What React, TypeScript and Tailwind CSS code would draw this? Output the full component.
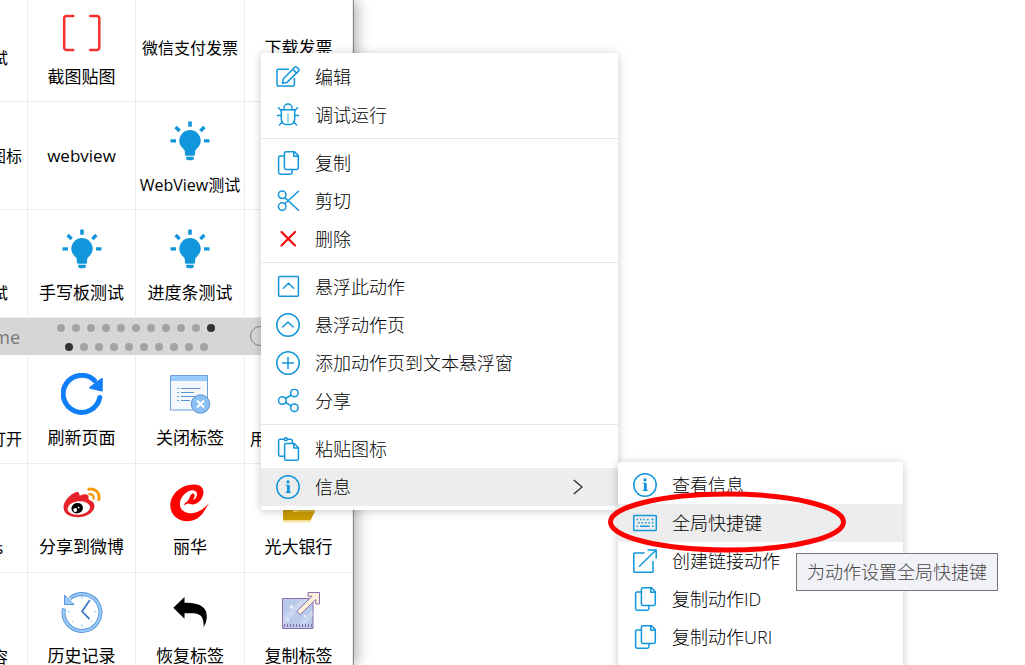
import { useState, type ReactNode } from 'react';

interface ActionCell {
  label: string;
  icon?: ReactNode;
  small?: boolean;
}

interface MenuEntry {
  label: string;
  icon: ReactNode;
  hasSubmenu?: boolean;
}

/* ---------- action icons ---------- */

function BracketIcon() {
  return (
    <svg viewBox="0 0 40 40" className="size-10" fill="none" stroke="#f5302e" strokeWidth="2.5" strokeLinecap="round">
      <path d="M11.200 3H4.500a2.300 2.300 0 0 0-2.300 2.300v29.400A2.300 2.300 0 0 0 4.500 37h6.700" />
      <path d="M28.300 3h6.700a2.300 2.300 0 0 1 2.300 2.300v29.400a2.300 2.300 0 0 1-2.300 2.300h-6.700" />
    </svg>
  );
}

function BulbIcon() {
  return (
    <svg viewBox="0 0 40 40" className="size-10" fill="#1296db">
      <path d="M20 9.100a10.700 10.700 0 0 1 10.700 10.700c0 4.300-2.600 6.600-4.600 8.600-.9.900-1 2-1 3.200v1.600a1.500 1.500 0 0 1-1.500 1.500h-7.200a1.500 1.500 0 0 1-1.500-1.500v-1.600c0-1.200-.1-2.300-1-3.200-2-2-4.600-4.300-4.600-8.600A10.700 10.700 0 0 1 20 9.100z" />
      <path d="M16.200 35.800h7.600v1.500a2 2 0 0 1-2 2h-3.600a2 2 0 0 1-2-2z" />
      <path d="M18.200.6h3.600v5.200h-3.600zM.5 18.200h5.500v3.400H.5zM34 18.200h5.500v3.400H34z" />
      <path d="M6.800 4.800l4 4-2.400 2.400-4-4zM33.200 4.800l-4 4 2.400 2.400 4-4z" />
    </svg>
  );
}

function RefreshIcon() {
  return (
    <svg viewBox="0 0 42 42" className="size-[42px]" fill="none">
      <path d="M38.800 24.500A18.500 18.500 0 1 1 33.500 7.500" stroke="#0f7ef7" strokeWidth="5" strokeLinecap="round" />
      <path d="M40.200 5.200a1 1 0 0 1 1.600.8v11.500a1 1 0 0 1-1.200 1l-11.600-2.700a1 1 0 0 1-.5-1.700z" fill="#0f7ef7" />
    </svg>
  );
}

function CloseTabIcon() {
  return (
    <svg viewBox="0 0 42 42" className="size-[42px]" fill="none">
      <path d="M1.500 2.500h37v34.500h-37z" fill="#f4f8fd" stroke="#6ba0da" />
      <path d="M2 3h36v5H2z" fill="#98ccfd" />
      <path d="M8 15.500h2M8 19.500h2M8 23.500h2M8 27.500h2" stroke="#6ba0da" />
      <path d="M12 15.500h19.500M12 19.500h13M12 23.500h15M12 27.500h9" stroke="#5b94d3" />
      <circle cx="31.500" cy="31" r="9.200" fill="#8cc0f5" stroke="#5b94d3" />
      <path d="M28 27.500l7 7M35 27.500l-7 7" stroke="#fff" strokeWidth="2" />
    </svg>
  );
}

function WeiboIcon() {
  return (
    <svg viewBox="0 0 40 40" className="size-10" fill="none">
      <path
        d="M1.500 24c0-5 5-11 10.500-14 3-1.600 5.500-1.200 5.300 1.200-.1 1 .3 1.600 1.500 1.100 3-1.400 7.200-1.400 7.700 1.200.3 1.500-.6 2.700 1 3.400 2.800 1 5 2.800 5 6 0 6-7.500 11.300-16.500 11.300S1.500 30.500 1.500 24z"
        fill="#e6232a"
      />
      <ellipse cx="16.800" cy="25" rx="11.200" ry="6.700" fill="#fff" transform="rotate(-6 16.800 25)" />
      <ellipse cx="15.200" cy="25.200" rx="5.800" ry="5.200" fill="#000" transform="rotate(-20 15.200 25.200)" />
      <circle cx="13.200" cy="27" r="1.900" fill="#fff" />
      <circle cx="16.600" cy="24.600" r="0.900" fill="#fff" />
      <path d="M26.800 6.200C33 5 38.300 9.500 36.800 16.500" stroke="#f59a11" strokeWidth="3" strokeLinecap="round" />
      <path d="M27.500 11.300c2.800-.4 4.600 1.500 4 4.200" stroke="#f59a11" strokeWidth="2.400" strokeLinecap="round" />
    </svg>
  );
}

function LihuaIcon() {
  return (
    <svg viewBox="0 0 40 40" className="size-10" fill="#fe0000">
      <path d="M14 21.800c.2-1.700 2.600-2.500 4-4.300 1.700-2.300 2-5.600 3.700-6.600 1.800-.9 3.300.3 2.900 2.300-.3 1.600-1.100 2.600-1.300 3.900 2.700-1.300 4-4.500 3.600-6.800C26.400 7.500 22 6.300 18 8.500c-5.500 3.200-8.800 8.800-8 14 .9 5.500 6.500 8.600 13.500 7.500C31 28.800 34.500 24 39.700 20c-2.500 2.500-3.700 5.500-6 9-3.700 5.500-9.500 9.300-16.500 9.200C7.500 38 .3 31.500.3 22.500.3 12 10 1.800 24.500 1.600c5.500-.1 9.500 3.400 8.900 8.800-.6 5.600-5.500 11-11.200 11-1.600 0-2.500-1-4-.8-1.500.1-2.700 1.700-4.200 1.200z" />
    </svg>
  );
}

function EverbrightIcon() {
  return (
    <svg viewBox="0 0 40 40" className="size-10">
      <path d="M4 2h10v27H4z" fill="#c89600" />
      <path d="M14 2h4v27h-4z" fill="#f6d25a" />
      <path d="M18 16h18v13l-4 3H18z" fill="#d8b23a" />
      <path d="M4 29h31.500l-4 8.500H4z" fill="#cb9b05" />
      <path d="M4 37.500h28v2H4z" fill="#f6e7a8" />
    </svg>
  );
}

function HistoryIcon() {
  return (
    <svg viewBox="0 0 42 42" className="size-[42px]" fill="none">
      <path d="M3 17.500A18.400 18.400 0 1 0 9 7.500" stroke="#5a93d2" strokeWidth="4" />
      <path d="M3 17.500A18.400 18.400 0 1 0 9 7.500" stroke="#98ccfd" strokeWidth="2.200" />
      <path d="M3.500 4v9.500H13z" fill="#98ccfd" stroke="#5a93d2" strokeLinejoin="round" />
      <path d="M28.500 9.500L21 20.500l7 7" stroke="#3f7fc4" strokeWidth="1.800" strokeLinecap="round" />
      <path d="M21 5.500v2M21 33.500v2M6.500 20.500h2M33.500 20.500h2M11 30.500h1M30 30.500h1" stroke="#98ccfd" strokeWidth="1.500" />
    </svg>
  );
}

function UndoIcon() {
  return (
    <svg viewBox="0 0 40 40" className="size-10" fill="#000">
      <path d="M3.300 15.800L14.500 5v5.700c9 0 17.500 1.300 20.800 7.300 2.700 5.500 1.500 12-1.600 17 .2-8.500-2-13.200-9.700-13.700-3.300-.2-6.300 0-9.500 0v5.500z" />
    </svg>
  );
}

function CopyTabIcon() {
  return (
    <svg viewBox="0 0 42 42" className="size-[42px]" fill="none">
      <path d="M4.500 7.500h30.500v30h-30.500z" fill="#b9cbea" stroke="#8e6cab" />
      <path d="M5 27L24 8h7L5 34zM20 34L34.500 19v6L25 34z" fill="#cbd7f1" />
      <path d="M6 34.500h29" stroke="#7d5b9d" strokeWidth="2.500" strokeDasharray="1 2" />
      <path d="M13.500 14v4M11.500 16h4M27 24v2M26 25h2M10 28v2M9 29h2" stroke="#fff" />
      <path d="M19 20.200L34 5.200h-4V1.500h11.500V13h-3.700V8.500L22 23.800z" fill="#fdf1dc" stroke="#8e6cab" strokeLinejoin="round" />
    </svg>
  );
}

/* ---------- menu icons ---------- */

function MenuIcon({ children }: { children: ReactNode }) {
  return (
    <svg
      viewBox="0 0 24 24"
      className="size-6 shrink-0"
      fill="none"
      stroke="#1296db"
      strokeWidth="1.5"
      strokeLinecap="round"
      strokeLinejoin="round"
    >
      {children}
    </svg>
  );
}

const editIcon = (
  <MenuIcon>
    <path d="M12.500 4.200H2.200A1.200 1.200 0 0 0 1 5.400v14.400A1.200 1.200 0 0 0 2.200 21h15a1.200 1.200 0 0 0 1.200-1.200V13.500" />
    <path d="M6.500 18.300l.9-4.500L18.700 2.300a1.500 1.500 0 0 1 2.100 0l1.700 1.700a1.500 1.500 0 0 1 0 2.100L11 17.400zM16.800 4.300l3.800 3.800" />
  </MenuIcon>
);

const bugIcon = (
  <MenuIcon>
    <path d="M5.300 6.800h13.400v9.700a5 5 0 0 1-5 5h-3.400a5 5 0 0 1-5-5z" />
    <path d="M8 6.800V5a4 4 0 0 1 8 0v1.800M1.500 12.500h3.800M18.700 12.500h3.800M5.300 7.800L2.500 4.800M18.700 7.800l2.800-3M6.500 19l-3.200 3M17.500 19l3.200 3" />
    <path d="M12 11V19.500" strokeWidth="0.800" />
  </MenuIcon>
);

const copyIcon = (
  <MenuIcon>
    <path d="M10 .8h8.500l3.800 3.800v12.200a1.600 1.600 0 0 1-1.600 1.600H10a1.600 1.600 0 0 1-1.600-1.600V2.400A1.600 1.600 0 0 1 10 .8zM17.800 1v4.300h4.300" />
    <path d="M8.400 5H4.200a1.600 1.600 0 0 0-1.600 1.600v15A1.600 1.600 0 0 0 4.200 23.200h10.200a1.600 1.600 0 0 0 1.600-1.600v-3" />
  </MenuIcon>
);

const cutIcon = (
  <MenuIcon>
    <circle cx="6.200" cy="5.700" r="3.800" />
    <circle cx="6.200" cy="17.600" r="3.800" />
    <path d="M8.800 8.500L22.500 21.300M8.800 14.800L22.500 2.200" />
  </MenuIcon>
);

const deleteIcon = (
  <MenuIcon>
    <path d="M5.500 5l13.500 13.500M19 5L5.500 18.500" stroke="#f20d0d" strokeWidth="2.200" />
  </MenuIcon>
);

const floatActionIcon = (
  <MenuIcon>
    <rect x="2.600" y="1.600" width="19.800" height="19.600" rx="1" />
    <path d="M7.300 13.300l5.200-5 5.200 5" />
  </MenuIcon>
);

const floatPageIcon = (
  <MenuIcon>
    <circle cx="12" cy="12" r="11.200" />
    <path d="M6.800 14l5.200-5 5.200 5" />
  </MenuIcon>
);

const addIcon = (
  <MenuIcon>
    <circle cx="12" cy="12" r="11.200" />
    <path d="M12 6.500v11M6.500 12h11" />
  </MenuIcon>
);

const shareIcon = (
  <MenuIcon>
    <circle cx="6.300" cy="11.500" r="3.800" />
    <circle cx="18.400" cy="4" r="3.800" />
    <circle cx="18.400" cy="18.800" r="3.800" />
    <path d="M9.600 9.500l5.600-3.500M9.600 13.500l5.600 3.400" />
  </MenuIcon>
);

const pasteIcon = (
  <MenuIcon>
    <path d="M10.200 6.500h8l4.200 4.200v11a1.600 1.600 0 0 1-1.600 1.600H10.200a1.600 1.600 0 0 1-1.600-1.600V8.100a1.600 1.600 0 0 1 1.600-1.600zM17.800 6.700v4.300h4.300" />
    <path d="M8.400 19.300H4.200a1.600 1.600 0 0 1-1.600-1.600V3.800a1.600 1.600 0 0 1 1.600-1.600h3.800M11.500 2.200h3.200a1.600 1.600 0 0 1 1.600 1.600V6" />
    <circle cx="9.700" cy="2.300" r="1.500" />
  </MenuIcon>
);

const infoIcon = (
  <MenuIcon>
    <circle cx="12" cy="12" r="11.200" />
    <circle cx="12" cy="6.900" r="1.600" fill="#1296db" stroke="none" />
    <path d="M9.700 10.300h3.500v7.200" strokeWidth="1" strokeLinecap="butt" />
    <path d="M12.200 10v7.500" strokeWidth="2.400" strokeLinecap="butt" />
    <path d="M9.700 17.400h5" strokeWidth="1.300" strokeLinecap="butt" />
  </MenuIcon>
);

const keyboardIcon = (
  <MenuIcon>
    <rect x="0.700" y="4.500" width="22.600" height="15" rx="1" />
    <g strokeWidth="1.500" strokeLinecap="butt">
      <path d="M3.500 8.500h1.500M7 8.500h1.500M10.500 8.500h1.500M14 8.500h1.500M18.500 8.500h2" />
      <path d="M5 11.700h1.500M8.500 11.700h1.500M12 11.700h1.500M15.500 11.700h1.500M19 11.700h1.500" />
      <path d="M3.500 15.300h1.500M7 15.300h9.500M19 15.300h1.500" />
    </g>
  </MenuIcon>
);

const linkIcon = (
  <MenuIcon>
    <path d="M11 4H1.800A1 1 0 0 0 .8 5v17.300a1 1 0 0 0 1 1H19a1 1 0 0 0 1-1V12.500" />
    <path d="M6.500 17.300L23 1M15 1h8.200v8" />
  </MenuIcon>
);

/* ---------- data ---------- */

const topRows: ActionCell[][] = [
  [{ label: '截图贴图', icon: <BracketIcon /> }, { label: '微信支付发票', small: true }, { label: '下载发票' }],
  [{ label: 'webview' }, { label: 'WebView测试', icon: <BulbIcon />, small: true }, { label: '' }],
  [{ label: '手写板测试', icon: <BulbIcon /> }, { label: '进度条测试', icon: <BulbIcon /> }, { label: '' }],
];

const bottomRows: ActionCell[][] = [
  [{ label: '刷新页面', icon: <RefreshIcon /> }, { label: '关闭标签', icon: <CloseTabIcon /> }, { label: '' }],
  [
    { label: '分享到微博', icon: <WeiboIcon /> },
    { label: '丽华', icon: <LihuaIcon /> },
    { label: '光大银行', icon: <EverbrightIcon /> },
  ],
  [
    { label: '历史记录', icon: <HistoryIcon /> },
    { label: '恢复标签', icon: <UndoIcon /> },
    { label: '复制标签', icon: <CopyTabIcon /> },
  ],
];

const menuGroups: MenuEntry[][] = [
  [
    { label: '编辑', icon: editIcon },
    { label: '调试运行', icon: bugIcon },
  ],
  [
    { label: '复制', icon: copyIcon },
    { label: '剪切', icon: cutIcon },
    { label: '删除', icon: deleteIcon },
  ],
  [
    { label: '悬浮此动作', icon: floatActionIcon },
    { label: '悬浮动作页', icon: floatPageIcon },
    { label: '添加动作页到文本悬浮窗', icon: addIcon },
    { label: '分享', icon: shareIcon },
  ],
  [
    { label: '粘贴图标', icon: pasteIcon },
    { label: '信息', icon: infoIcon, hasSubmenu: true },
  ],
];

const infoEntries: MenuEntry[] = [
  { label: '查看信息', icon: infoIcon },
  { label: '全局快捷键', icon: keyboardIcon },
  { label: '创建链接动作', icon: linkIcon },
  { label: '复制动作ID', icon: copyIcon },
  { label: '复制动作URI', icon: copyIcon },
];

/* ---------- parts ---------- */

function Cell({ label, icon, small }: ActionCell) {
  return (
    <button
      className={`flex flex-col items-center justify-center gap-3 overflow-hidden border-r border-[#ececec] whitespace-nowrap ${
        icon ? 'pt-1.5' : ''
      }`}
    >
      {icon && <span className="flex h-10 items-center">{icon}</span>}
      <span className={small ? 'text-[16px] leading-6' : 'text-[17px] leading-6'}>{label}</span>
    </button>
  );
}

// the window hangs over the left screen edge, only the end of this column shows
function EdgeCell({ label, position }: { label: string; position: string }) {
  return (
    <button className={`flex justify-end overflow-hidden border-r border-[#ececec] text-[16px] leading-6 whitespace-nowrap ${position}`}>
      {label}
    </button>
  );
}

function Dots({ count, active }: { count: number; active: number }) {
  return (
    <div className="flex gap-[7px]">
      {Array.from({ length: count }, (_, i) => (
        <span key={i} className={`size-2 rounded-full ${i === active ? 'bg-[#333]' : 'bg-[#a3a3a3]'}`} />
      ))}
    </div>
  );
}

function MenuItem({ entry, active, onHover }: { entry: MenuEntry; active: boolean; onHover: () => void }) {
  return (
    <button
      role="menuitem"
      onMouseEnter={onHover}
      className={`flex h-[38px] w-full items-center gap-[15px] px-[15px] text-left text-[18px] leading-6 whitespace-nowrap text-black ${
        active ? 'bg-[#ededed]' : ''
      }`}
    >
      {entry.icon}
      <span className="flex-1">{entry.label}</span>
      {entry.hasSubmenu && (
        <svg viewBox="0 0 10 16" className="mr-5 h-4 w-[10px]" fill="none" stroke="#333" strokeWidth="1.400">
          <path d="M.8 1l8.200 7-8.200 7" />
        </svg>
      )}
    </button>
  );
}

export default function App() {
  const [active, setActive] = useState('信息');
  const [activeInfo, setActiveInfo] = useState('全局快捷键');

  return (
    <div className="relative h-screen overflow-hidden bg-white font-['Open_Sans','Noto_Sans_CJK_SC',sans-serif] font-light text-black">
      <main className="flex h-full w-[354px] flex-col overflow-hidden border-r border-[#8a8a8a] bg-white font-normal shadow-[2px_0_14px_rgba(0,0,0,0.35)]">
        <section className="flex h-[318px] shrink-0 flex-col justify-end">
          {topRows.map((row, i) => (
            <div key={i} className="grid h-[108px] shrink-0 grid-cols-[28px_108px_109px_108px] border-b border-[#ececec]">
              {i === 0 && <EdgeCell label="试" position="items-center pr-[19px] pt-5" />}
              {i === 1 && <EdgeCell label="图标" position="items-center pr-[5px]" />}
              {i === 2 && <EdgeCell label="试" position="items-end pr-[19px] pb-3" />}
              {row.map((cell, j) => (
                <Cell key={j} {...cell} />
              ))}
            </div>
          ))}
        </section>

        <nav className="flex h-[37px] shrink-0 items-center bg-[#d6d6d6] pt-0.5">
          <span className="flex w-7 justify-end pr-2 text-[18px] text-[#777]">me</span>
          <div className="flex w-[216px] flex-col items-center gap-[11px]">
            <Dots count={11} active={10} />
            <Dots count={10} active={0} />
          </div>
          <span className="mb-1 ml-[6px] size-5 rounded-full border border-[#808080]" />
        </nav>

        <section className="shrink-0">
          {bottomRows.map((row, i) => (
            <div key={i} className="grid h-[109px] grid-cols-[28px_108px_109px_108px] border-b border-[#ececec]">
              {i === 0 && <EdgeCell label="打开" position="items-end pr-[5px] pb-3" />}
              {i === 1 && <EdgeCell label="s" position="items-end pr-6 pb-3" />}
              {i === 2 && <EdgeCell label="容" position="items-end pr-[19px] pb-3" />}
              {row.map((cell, j) =>
                i === 0 && j === 2 ? (
                  <button key={j} className="flex items-end pb-3 pl-[5px] text-[16px] leading-6">
                    用
                  </button>
                ) : (
                  <Cell key={j} {...cell} />
                )
              )}
            </div>
          ))}
        </section>
      </main>

      <div
        role="menu"
        className="absolute top-[53px] left-[261px] w-[357px] rounded-[3px] bg-white pt-[5px] pb-1 shadow-[0_1px_10px_rgba(0,0,0,0.22)]"
      >
        {menuGroups.map((group, i) => (
          <div key={i}>
            {i > 0 && <div role="separator" className="mt-1 mb-[5px] h-px bg-[#e6e6e6]" />}
            {group.map((entry) => (
              <MenuItem
                key={entry.label}
                entry={entry}
                active={entry.label === active}
                onHover={() => setActive(entry.label)}
              />
            ))}
          </div>
        ))}
      </div>

      <div
        role="menu"
        className="absolute top-[462px] left-[618px] w-[285px] rounded-[3px] bg-white pt-1 pb-8 shadow-[0_1px_10px_rgba(0,0,0,0.22)]"
      >
        {infoEntries.map((entry) => (
          <MenuItem
            key={entry.label}
            entry={entry}
            active={entry.label === activeInfo}
            onHover={() => setActiveInfo(entry.label)}
          />
        ))}
      </div>

      <svg viewBox="0 0 240 62" className="pointer-events-none absolute top-[491px] left-[607px] h-[62px] w-60" fill="none">
        <ellipse cx="120" cy="31" rx="116.500" ry="28" stroke="#fe0000" strokeWidth="5" />
      </svg>

      <div
        role="tooltip"
        className="absolute top-[553px] left-[796px] border border-[#767676] bg-[#f1f2f7] px-[10px] py-[6px] text-[18px] leading-6 whitespace-nowrap text-[#444]"
      >
        为动作设置全局快捷键
      </div>
    </div>
  );
}
